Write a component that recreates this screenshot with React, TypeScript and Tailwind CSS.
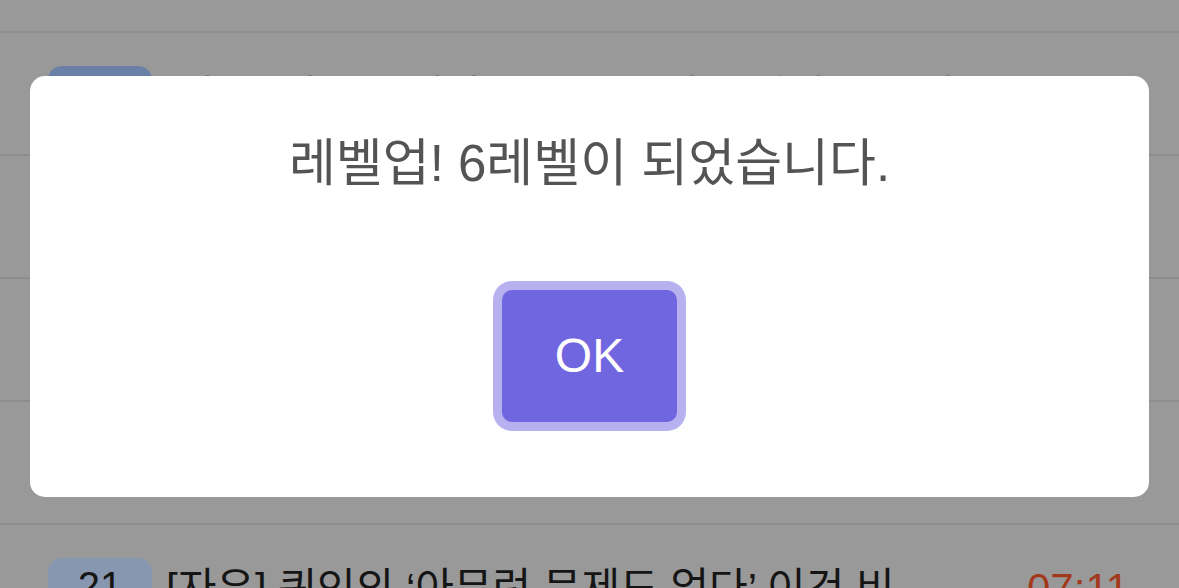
const font = { fontFamily: '"Liberation Sans", "Noto Sans CJK KR", sans-serif' };

interface Post {
  no: number;
  title: string;
  time: string;
  badge: string;
}

const posts: Post[] = [
  { no: 22, title: "[자유] 천주교 신자인데 오늘 질문 하나 드립니다", time: "07:24", badge: "bg-[#6a80a6]" },
  { no: 0, title: "", time: "", badge: "" },
  { no: 0, title: "", time: "", badge: "" },
  { no: 0, title: "", time: "", badge: "" },
  { no: 21, title: "[자유] 퀴인의 ‘아무런 문제도 없다’ 이건 비", time: "07:11", badge: "bg-[#8797b0]" },
];

function PostRow({ post }: { post: Post }) {
  return (
    <div className="h-[123px] shrink-0 border-t-2 border-[#8d8d8d] pt-[33px] pl-[48px] pr-[50px]">
      {post.title && (
        <div className="flex items-start">
          <div
            className={`w-[104px] h-[56px] rounded-[14px] ${post.badge} flex items-center justify-center text-[40px] text-[#161616] shrink-0`}
          >
            {post.no}
          </div>
          <div className="ml-[14px] flex-1 pt-[3px] text-[42px] leading-[56px] text-[#151515] whitespace-nowrap overflow-hidden">
            {post.title}
          </div>
          <div className="ml-[20px] pt-[3px] text-[42px] leading-[56px] text-[#a2391c]">{post.time}</div>
        </div>
      )}
    </div>
  );
}

export default function App() {
  return (
    <div className="relative w-[1179px] h-[588px] overflow-hidden bg-[#999999]" style={font}>
      {/* list behind the backdrop */}
      <div className="flex flex-col">
        <div className="h-[31px] shrink-0" />
        {posts.map((p, i) => (
          <PostRow key={i} post={p} />
        ))}
      </div>

      {/* level-up alert */}
      <div className="absolute inset-0 flex items-center justify-center px-[30px] pb-[15px]">
        <div className="w-full h-[421px] bg-white rounded-[15px] flex flex-col items-center pt-[57px]">
          <h2 className="text-[51px] leading-[62px] text-[#545454] font-normal">
            레벨업! 6레벨이 되었습니다.
          </h2>
          <button className="mt-[95px] w-[175px] h-[132px] rounded-[10px] bg-[#7066e0] text-white text-[48px] shadow-[0_0_0_9px_rgba(112,102,224,0.5)]">
            OK
          </button>
        </div>
      </div>
    </div>
  );
}
